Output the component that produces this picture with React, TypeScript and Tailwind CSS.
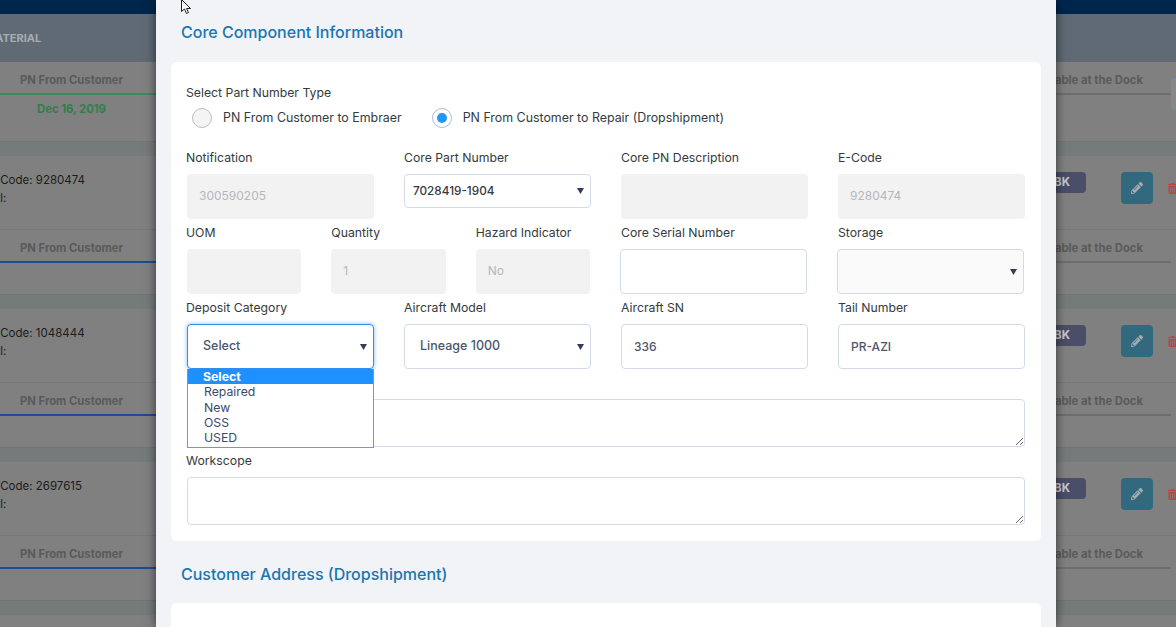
import { FaPencilAlt, FaTrashAlt } from "react-icons/fa";

const font = "font-['Inter','Noto_Sans',sans-serif]";
const labelCls = "block text-[12.25px] leading-[17px] text-[#343a40] h-[17px] whitespace-nowrap";
const fieldCls =
  "block w-full h-[45px] rounded-[4px] border border-[#d3daea] bg-white px-[12px] pb-[1px] text-[12px] font-medium text-[#49566e] outline-none";
const disabledCls =
  "block w-full h-[45px] rounded-[4px] bg-[#f2f2f3] px-[12px] pb-[2px] text-[12px] text-[#b5b7ba] outline-none";

function BackgroundRow({ code }: { code: string }) {
  return (
    <div>
      <div className="h-[15px] bg-[#757b7b] border-t border-[#6f7575]" />
      <div className="h-[74px] border-b border-[#787878]">
        <div className="flex justify-between">
          <div className="-ml-[12px] pt-[15px] text-[11.5px] leading-[18px] text-[#1c1c1c]">
            <div>E-Code: {code}</div>
            <div className="-ml-[2px]">Mtl:</div>
          </div>
          <div className="flex items-start pt-[16px]">
            <span className="mr-[35px] flex h-[21px] w-[60px] items-center justify-end rounded-[4px] bg-[#4a4e68] pr-[16px] text-[11.5px] font-bold text-[#c8c8c8]">
              BK
            </span>
            <span className="mr-[14px] flex h-[32px] w-[32px] items-center justify-center rounded-[4px] bg-[#33697f] text-[#a5abaf]">
              <FaPencilAlt size={12} />
            </span>
            <FaTrashAlt size={11} className="mr-[-2px] mt-[11px] text-[#b34a4a]" />
          </div>
        </div>
      </div>
      <BackgroundStatus line="bg-[#1f4a96]" />
    </div>
  );
}

function BackgroundStatus({ line, date, tall }: { line: string; date?: string; tall?: boolean }) {
  return (
    <div className={`flex justify-between ${tall ? "h-[79px]" : "h-[64px]"}`}>
      <div className="w-[156px]">
        <div className="pl-[20px] pt-[9px] text-[11.25px] font-bold leading-[18px] text-[#5a5a5a]">PN From Customer</div>
        <div className={`mt-[4px] h-[2px] ${line}`} />
        {date && <div className="-ml-[13px] pt-[6px] text-center text-[11.25px] font-bold text-[#2f7f4c]">{date}</div>}
      </div>
      <div className="w-[190px]">
        <div className="pr-[33px] pt-[9px] text-right text-[11.25px] font-bold leading-[18px] whitespace-nowrap text-[#5a5a5a]">
          Available at the Dock
        </div>
        <div className="mr-[5px] mt-[4px] h-[2px] bg-[#6e6e6e]" />
      </div>
    </div>
  );
}

function Radio({ checked, label }: { checked?: boolean; label: string }) {
  return (
    <label className="flex items-center gap-[11px] text-[12.4px] text-[#343a40] whitespace-nowrap">
      <span
        className={`flex h-[20px] w-[20px] items-center justify-center rounded-full border ${
          checked ? "border-[#a9bbd2] bg-white" : "border-[#bdbdbd] bg-[#f4f4f4]"
        }`}
      >
        {checked && <span className="h-[10px] w-[10px] rounded-full bg-[#2196f3]" />}
      </span>
      {label}
    </label>
  );
}

function Field({ label, nudge, children }: { label: string; nudge?: boolean; children: React.ReactNode }) {
  return (
    <div className="min-w-0">
      <label className={`${labelCls} ${nudge ? "-ml-px" : ""}`}>{label}</label>
      <div className="mt-[8px]">{children}</div>
    </div>
  );
}

function Select({ value, className }: { value: string; className: string }) {
  return (
    <div className="relative">
      <select defaultValue={value} className={`block w-full appearance-none rounded-[4px] border outline-none ${className}`}>
        <option>{value}</option>
      </select>
      <svg className="pointer-events-none absolute right-[7px] top-1/2 -mt-[3px]" width="7" height="6" viewBox="0 0 7 6">
        <path d="M0 0H7L3.5 6Z" fill="#333d55" />
      </svg>
    </div>
  );
}

export default function App() {
  return (
    <div className={`relative h-[627px] w-[1176px] overflow-hidden bg-[#808080] ${font}`}>
      {/* page behind the modal */}
      <div className="h-[14px] bg-[#00264d]" />
      <div className="flex h-[48px] items-center bg-[#5f6a75]">
        <span className="-ml-[15px] text-[11px] font-bold text-[#a8adb3]">MATERIAL</span>
      </div>
      <div className="relative">
        <BackgroundStatus tall line="bg-[#3a8a5a]" date="Dec 16, 2019" />
        <span className="absolute right-[-20px] top-[16px] h-[32px] w-[25px] rounded-[4px] border border-[#6d8cc0] bg-[#888]" />
      </div>
      <BackgroundRow code="9280474" />
      <BackgroundRow code="1048444" />
      <BackgroundRow code="2697615" />
      <div className="h-[15px] bg-[#757b7b] border-t border-[#6f7575]" />

      {/* modal */}
      <div className="absolute left-[156px] top-0 h-[627px] w-[900px] bg-[#f1f3f6] px-[15px] shadow-[0_0_10px_rgba(0,0,0,0.6)]">
        <h2 className="pl-[10px] pt-[23px] text-[16px] font-medium leading-[19px] text-[#1a76b0]">
          Core Component Information
        </h2>
        <div className="mt-[20px] h-[479px] rounded-[6px] bg-white pl-[16px] pr-[16px] pt-[22px]">
          <div className="-ml-px text-[12.25px] leading-[17px] text-[#343a40]">Select Part Number Type</div>
          <div className="mt-[5px] flex h-[24px] gap-[30px] pl-[5px]">
            <Radio label="PN From Customer to Embraer" />
            <Radio checked label="PN From Customer to Repair (Dropshipment)" />
          </div>
          <div className="mt-[19px] grid grid-cols-4 gap-x-[30px] gap-y-[5px]">
            <Field nudge label="Notification">
              <input readOnly value="300590205" className={disabledCls} />
            </Field>
            <Field label="Core Part Number">
              <Select value="7028419-1904" className="h-[34px] border-[#d3daea] bg-white pl-[8px] pt-[1px] text-[11.75px] font-medium text-[#343a40]" />
            </Field>
            <Field label="Core PN Description">
              <input readOnly value="" className={disabledCls} />
            </Field>
            <Field label="E-Code">
              <input readOnly value="9280474" className={disabledCls} />
            </Field>

            <div className="col-span-2 mr-px grid grid-cols-3 gap-x-[30px]">
              <Field nudge label="UOM">
                <input readOnly value="" className={disabledCls} />
              </Field>
              <Field label="Quantity">
                <input readOnly value="1" className={disabledCls} />
              </Field>
              <Field label="Hazard Indicator">
                <input readOnly value="No" className={disabledCls} />
              </Field>
            </div>
            <Field label="Core Serial Number">
              <div className="-ml-px mr-px">
                <input readOnly value="" className={fieldCls} />
              </div>
            </Field>
            <Field label="Storage">
              <div className="-ml-px mr-px">
                <Select value="" className="h-[45px] border-[#d3daea] bg-[#fafafa] pl-[15px] text-[12.5px]" />
              </div>
            </Field>

            <Field nudge label="Deposit Category">
              <div className="relative">
                <Select value="Select" className="h-[45px] border-[#2e8fee] bg-white pl-[15px] text-[12.5px] font-medium text-[#49566e] shadow-[0_0_4px_rgba(46,143,238,0.6)]" />
                <ul className="absolute left-0 right-0 top-[45px] z-10 h-[79px] border border-t-0 border-[#7f93c4] bg-white text-[12.25px] leading-[15.3px] text-[#3b4a6b]">
                  <li className="bg-[#1e90ff] pl-[15px] font-bold text-white">Select</li>
                  <li className="pl-[16px]">Repaired</li>
                  <li className="pl-[16px]">New</li>
                  <li className="pl-[16px]">OSS</li>
                  <li className="pl-[16px]">USED</li>
                </ul>
              </div>
            </Field>
            <Field label="Aircraft Model">
              <Select value="Lineage 1000" className="h-[45px] border-[#d3daea] bg-white pl-[15px] text-[12.5px] font-medium text-[#49566e]" />
            </Field>
            <Field label="Aircraft SN">
              <input readOnly value="336" className={fieldCls} />
            </Field>
            <Field label="Tail Number">
              <input readOnly value="PR-AZI" className={fieldCls} />
            </Field>
          </div>
          <div className="mt-[5px]">
            <label className={labelCls}>Remarks</label>
            <textarea readOnly className="mt-[8px] block h-[48px] w-full rounded-[4px] border border-[#d3daea] bg-white outline-none" />
          </div>
          <div className="mt-[5px]">
            <label className={`${labelCls} -ml-px`}>Workscope</label>
            <textarea readOnly className="mt-[8px] block h-[48px] w-full rounded-[4px] border border-[#d3daea] bg-white outline-none" />
          </div>
        </div>
        <h2 className="pl-[10px] pt-[24px] text-[16px] font-medium leading-[19px] text-[#1a76b0]">
          Customer Address (Dropshipment)
        </h2>
        <div className="mt-[19px] h-[40px] rounded-[6px] bg-white" />
      </div>

      {/* mouse pointer */}
      <svg className="absolute left-[181px] top-[-1px]" width="13" height="16" viewBox="0 0 13 16">
        <path d="M0.5 0.5V12.5L3.5 10L5.5 14.5L7.5 13.5L5.5 9.5H9.5Z" fill="#fff" stroke="#222" strokeWidth="1" />
      </svg>
    </div>
  );
}
